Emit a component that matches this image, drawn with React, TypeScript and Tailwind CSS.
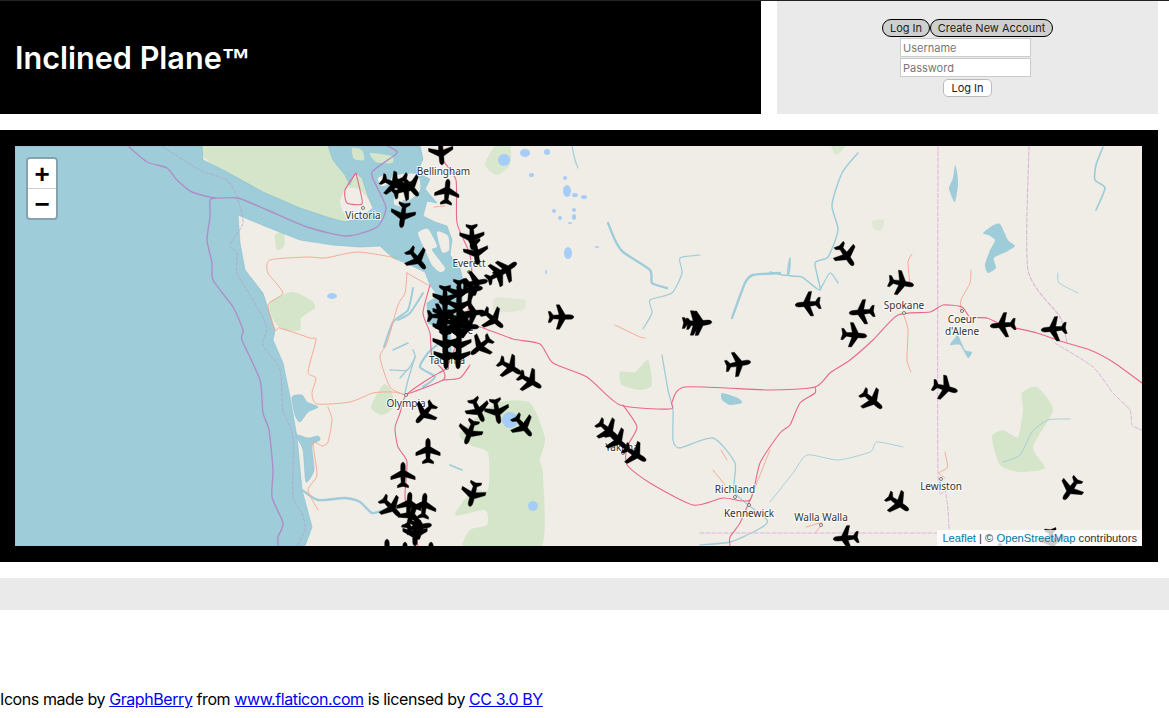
import React from "react";

const LAND = "#f0ede6";
const WATER = "#9fccd9";
const GREEN = "#d5e5c9";
const BLUE = "#a6cdf7";
const MOTOR = "#e8688c";
const TRUNK = "#f6a48c";
const PLANE = "M0,-12.8 C1.6,-12.8 2.3,-10.5 2.3,-8.5 L2.3,-4.2 L12.2,1.6 L12.2,4.7 L2.3,1.9 L1.8,7.6 L5.6,10.6 L5.6,12.8 L0,11.4 L-5.6,12.8 L-5.6,10.6 L-1.8,7.6 L-2.3,1.9 L-12.2,4.7 L-12.2,1.6 L-2.3,-4.2 L-2.3,-8.5 C-2.3,-10.5 -1.6,-12.8 0,-12.8Z";

const planes: [number, number, number][] = [
  [441, 152, 175], [393, 184, 115], [404, 188, 60], [410, 186, 140], [447, 192, 5], [403, 215, 188], [472, 237, 178], [476, 252, 172], [417, 259, 140],
  [498, 274, 60], [506, 270, 55], [475, 283, 80],
  [445, 298, 180], [445, 313, 180], [445, 328, 180], [445, 343, 180], [446, 356, 180],
  [459, 292, 180], [459, 305, 180], [459, 318, 180], [459, 331, 180], [459, 344, 180], [458, 356, 180],
  [440, 316, 90], [452, 322, 90], [470, 290, 80], [472, 313, 85], [466, 326, 95], [481, 346, 230],
  [493, 319, 130], [561, 317, 90], [695, 323, 90], [699, 323, 86],
  [846, 255, 145], [901, 283, 100], [808, 304, 265], [862, 312, 265], [854, 335, 95], [1003, 325, 265], [1054, 329, 265],
  [738, 364, 80], [510, 367, 120], [530, 381, 120], [425, 413, 222], [478, 410, 155], [497, 411, 170], [523, 426, 140], [470, 432, 200],
  [428, 451, 0], [403, 475, 0], [473, 494, 195], [391, 507, 135], [409, 505, 5], [424, 506, 5], [411, 517, 20], [419, 527, 80], [415, 533, 180],
  [387, 552, 0], [405, 555, 0], [431, 555, 0], [608, 430, 130], [617, 440, 130], [635, 454, 122], [945, 388, 105], [872, 400, 130], [898, 503, 125], [1071, 489, 215], [846, 538, 265], [1052, 541, 172], [1000, 556, 0],
];

const motorways = [
  "443,146 443,160 456,180 457,223 470,255 472,290 463,330 452,355 447,368 430,378 406,395 400,413 395,428 398,447 407,462 405,497 411,520 418,546",
  "463,325 480,327 513,339 540,344 553,363 587,377 620,405 670,409 672,402 685,387 770,390 815,387 830,373 850,360 873,340 898,315 930,312 943,305 962,307 970,317 987,318 1003,325 1037,333 1060,341 1090,350 1113,362 1142,383",
  "623,405 637,427 627,447 627,465 650,483 693,505 723,498 750,500 760,463 780,433 790,425 800,403 815,393 815,387",
  "750,500 740,523 730,537 730,546",
  "430,285 423,313 430,333 432,357 443,370 443,380 405,395",
  "443,380 460,378 470,365",
  "356,173 360,190 362,204 347,203 345,190 356,173",
];
const trunks = [
  "397,258 358,252 325,258 308,257 270,260 268,273 283,293 268,305 275,330 280,328 310,338 316,340 308,372 316,378 312,393 317,404 350,402 373,393 393,392 406,395",
  "328,407 332,420 328,442 322,446 313,443 317,475 308,490 318,510",
  "407,273 428,285",
  "407,273 405,293 398,305 387,343 380,357 390,387 405,395",
  "434,207 445,206",
  "615,325 640,337 645,338",
  "912,254 908,262 910,285",
  "971,270 970,283 961,300 961,312",
  "904,316 908,330 907,360 911,372",
  "945,452 947,462 947,468 939,473 945,478",
  "721,450 727,460",
  "713,470 725,485",
  "806,527 822,523 815,533",
  "770,450 750,500",
];
const rivers: [string, number][] = [
  ["608,223 615,240 623,252 650,270 652,283 667,288", 2.4],
  ["700,255 680,258 682,273 672,293 650,300 652,313 643,329", 1.2],
  ["732,318 745,283 753,275 780,273", 2.4],
  ["770,272 788,275 790,258 788,275 802,277 820,290 815,263 828,257 838,230 832,205 842,173 858,153", 1.5],
  ["820,290 830,273 838,283", 1.3],
  ["1103,147 1096,165 1095,180 1105,188 1096,210", 1.7],
  ["1058,273 1059,283 1078,293", 0.9],
  ["662,355 668,390 673,410 673,440 680,448 713,438 735,463 735,493 767,520 757,530 730,542 700,545", 1.3],
  ["770,502 793,473 807,455 838,460 870,452 877,442 903,447", 0.9],
  ["1003,462 1020,455 1032,432 1048,420 1070,419", 0.9],
  ["413,288 408,310 393,322 384,347", 2],
  ["423,293 410,313 398,320", 2],
  ["393,350 408,343", 1.6],
  ["413,350 415,357 407,370 390,370", 1.4],
  ["400,378 407,370", 1.4],
  ["405,393 408,380 415,357", 1.4],
  ["423,387 435,377 420,367 428,353 437,345", 2.2],
  ["302,490 318,500 345,498 360,502 372,513 385,510 395,510", 2.4],
  ["572,146 575,160 578,168", 1.2],
  ["448,320 450,350 446,366", 3],
  ["450,465 462,470", 1.6],
];
const labels: [string, number, number][] = [
  ["Victoria", 363, 219], ["Bellingham", 443.5, 175], ["Everett", 469, 267], ["Tacoma", 447, 364], ["Seattle", 457, 334], ["Olympia", 406, 407], ["Spokane", 904, 309],
  ["Coeur", 962, 323], ["d'Alene", 962, 335], ["Yakima", 622, 451], ["Richland", 735, 493], ["Kennewick", 749, 517], ["Walla Walla", 821, 521], ["Lewiston", 941, 490],
];
const dots: [number, number][] = [[363, 208], [406, 395], [447, 368], [904, 313], [962, 311], [623, 453], [735, 497], [749, 505], [821, 525], [941, 479], [469, 272]];
const lakes: [number, number, number, number][] = [
  [504, 160, 6, 6], [525, 153, 5, 4], [547, 152, 3, 3], [532, 175, 2, 2], [531, 175, 2, 2], [565, 178, 2, 2], [567, 191, 4, 6], [575, 195, 3, 2], [584, 197, 3, 2],
  [554, 211, 2, 2], [560, 218, 2, 2], [574, 210, 2, 2], [574, 217, 2, 3], [570, 223, 2, 1], [568, 253, 4, 6], [597, 247, 2, 1], [546, 272, 1, 2], [510, 420, 8, 8], [533, 506, 5, 5], [332, 296, 5, 3],
];

function smooth(pts: string, closed = false) {
  const p = pts.trim().split(/\s+/).map((s) => s.split(",").map(Number));
  const n = p.length;
  const at = (i: number) => (closed ? p[(i + n) % n] : p[Math.max(0, Math.min(n - 1, i))]);
  let d = `M${p[0][0]},${p[0][1]}`;
  const last = closed ? n : n - 1;
  for (let i = 0; i < last; i++) {
    const a = at(i - 1), b = at(i), c = at(i + 1), e = at(i + 2);
    const k = 0.11;
    d += ` C${b[0] + (c[0] - a[0]) * k},${b[1] + (c[1] - a[1]) * k} ${c[0] - (e[0] - b[0]) * k},${c[1] - (e[1] - b[1]) * k} ${c[0]},${c[1]}`;
  }
  return closed ? d + "Z" : d;
}

const line = (pts: string, stroke: string, w: number, dash?: string) => (
  <path d={smooth(pts)} fill="none" stroke={stroke} strokeWidth={w} strokeDasharray={dash} strokeLinejoin="round" strokeLinecap="round" />
);
const area = (pts: string, fill: string, opacity = 1, edge?: string) => (
  <path d={smooth(pts, true)} fill={fill} fillOpacity={opacity} stroke={edge ?? "none"} strokeWidth={edge ? 0.5 : 0} />
);

const SEA = "15,146 202,146 203,160 227,172 263,192 300,208 330,218 345,222 362,217 373,208 368,196 362,178 355,172 350,185 345,175 333,160 328,146 420,146 423,159 417,173 430,179 425,189 437,203 427,201 423,216 435,222 447,226 452,240 450,255 460,268 464,285 462,300 462,325 445,330 428,323 427,303 438,296 430,285 425,272 408,264 393,258 380,246 360,247 333,245 300,240 267,227 238,215 240,243 245,270 263,293 275,330 273,340 283,363 290,397 294,420 297,437 302,490 312,527 305,546 15,546";

function MapArt() {
  return (
    <svg viewBox="15 146 1127 400" className="block w-full h-full">
      <rect x="15" y="146" width="1127" height="400" fill={LAND} />
      {area("195,140 335,140 345,165 365,180 372,205 345,225 300,212 263,196 227,176", GREEN)}
      {area("340,202 347,188 360,190 372,208 350,222", LAND)}
      {area("270,302 292,292 311,300 315,308 301,318 300,330 283,330 272,318", GREEN)}
      {area("275,235 284,232 284,246 277,250", GREEN)}
      {area("378,392 385,384 392,392 393,408 382,415 371,408", GREEN)}
      {area("460,433 497,403 530,403 545,438 540,460 543,475 540,550 465,550 470,530 487,525 485,510 455,515 473,490 488,490 488,453 470,445", GREEN)}
      {area("620,372 635,372 648,360 652,385 640,390 622,385", GREEN)}
      {area("1037,387 1053,410 1033,447 1045,468 1020,472 1000,465 992,437 1003,430 1018,437 1023,410 1022,393", GREEN)}
      {area("495,146 510,146 510,165 497,175 485,165", GREEN, 0.8)}
      {area("495,298 525,300 522,310 495,312", GREEN, 0.6)}
      {area("830,142 845,146 836,155", GREEN, 0.8)}
      {area("872,221 884,220 881,231 874,229", GREEN, 0.6)}
      <path d={SEA.split(" ").map((p, i) => (i ? "L" : "M") + p).join(" ") + "Z"} fill={WATER} stroke="#86bdd2" strokeWidth="0.6" strokeLinejoin="round" />
      {area("393,176 417,174 420,190 407,201 390,190", LAND)}
      {area("418,233 428,229 437,246 432,250 445,268 440,272 432,265 425,250", LAND)}
      {area("437,232 448,236 449,250 442,252", LAND)}
      {area("352,148 362,150 364,160 354,159", GREEN)}
      {area("370,153 392,156 392,163 376,162", GREEN)}
      {area("395,197 403,199 400,206 394,204", LAND)}
      {area("378,178 386,175 388,184 381,186", LAND)}
      {area("292,397 302,395 307,402 318,407 308,412 300,422 295,415", WATER, 1, "#86bdd2")}
      {area("296,435 308,438 318,436 320,440 312,446 314,470 306,482 303,450", WATER, 1, "#86bdd2")}
      {area("722,393 738,398 742,403 730,405 722,400", WATER)}
      {area("955,165 957,172 958,185 955,202 951,195 949,188 953,178", WATER)}
      {area("983,233 992,226 1000,224 1008,240 1015,246 1006,252 994,258 996,268 988,273 985,265 990,250 995,240 988,235", WATER)}
      {area("955,338 958,335 965,350 972,352 968,358 960,345 950,345", WATER)}
      {rivers.map((r, i) => <React.Fragment key={i}>{line(r[0], WATER, r[1])}</React.Fragment>)}
      {lakes.map((l, i) => <ellipse key={i} cx={l[0]} cy={l[1]} rx={l[2]} ry={l[3]} fill={BLUE} />)}
      {line("128,146 147,162 167,168 177,180 192,192 215,198 238,198 267,210 307,227 347,236 377,227 386,208 377,187 372,172 397,153 387,146", "#ad8fc8", 1.4)}
      {line("215,198 210,200 210,217 207,240 212,263 213,280 233,307 243,330 242,340 260,380 263,413 269,430 273,470 272,497 283,523 278,537 278,546", "#ad8fc8", 1.4)}
      {line("163,147 200,170 227,180 237,197 243,223 230,245 237,253 237,273 253,300 267,327 263,345 280,370 283,410 293,437 293,497 302,513 305,530 297,546", "#b49ccd", 0.7, "3 2")}
      {line("938,146 938,473 945,490 948,510 950,546", "#dbb4d9", 1, "4 2")}
      {line("1029,146 1028,270 1060,317 1067,343", "#dbb4d9", 1.1, "4 2")}
      {line("1055,343 1093,367 1113,393 1130,410 1132,425 1142,430", "#dbb4d9", 1, "4 2")}
      {line("700,533 938,533", "#dbb4d9", 1, "4 2")}
      {trunks.map((t, i) => <React.Fragment key={i}>{line(t, TRUNK, 0.9)}</React.Fragment>)}
      {motorways.map((t, i) => <React.Fragment key={i}>{line(t, MOTOR, 1.1)}</React.Fragment>)}
      {dots.map((d, i) => <circle key={i} cx={d[0]} cy={d[1]} r="1.5" fill="#fff" stroke="#444" strokeWidth="0.7" />)}
      {labels.map((l, i) => (
        <text key={i} x={l[1]} y={l[2]} textAnchor="middle" fontSize="10" fill="#333" stroke="#fff" strokeWidth="2" strokeOpacity="0.8" className="[font-family:'Noto_Sans',sans-serif] [paint-order:stroke]">{l[0]}</text>
      ))}
      {planes.map((p, i) => <path key={i} d={PLANE} fill="#000" stroke="#000" strokeWidth="0.4" strokeLinejoin="round" transform={`translate(${p[0]} ${p[1]}) rotate(${p[2]})`} />)}
    </svg>
  );
}

export default function App() {
  return (
    <div className="w-[1169px] h-[718px] overflow-hidden bg-white border-t border-[#222] text-black [font-family:Inter,sans-serif]">
      <header className="flex gap-4 w-[1158px] h-[113px]">
        <div className="w-[761px] bg-black flex items-center pl-[15px] pt-[2px]">
          <h1 className="text-white text-[30.6px] font-semibold leading-none">Inclined Plane<span className="[font-family:'Liberation_Sans',sans-serif] font-bold text-[29px]">™</span></h1>
        </div>
        <div className="w-[381px] bg-[#eaeaea] flex flex-col items-center pt-[18px] text-[11px]">
          <div className="flex">
            <button className="h-[18px] w-[48px] rounded-full bg-[#cfcfcf] border border-black text-[#222] leading-none">Log In</button>
            <button className="h-[18px] w-[123px] rounded-full bg-[#cfcfcf] border border-black text-[#222] leading-none">Create New Account</button>
          </div>
          <input placeholder="Username" className="block w-[131px] h-[19px] bg-white border border-[#ccc] px-[2px] mt-px text-[11px] placeholder:text-[#777] mr-[4px]" />
          <input placeholder="Password" className="block w-[131px] h-[19px] bg-white border border-[#ccc] px-[2px] mt-px text-[11px] placeholder:text-[#777] mr-[4px]" />
          <button className="h-[18px] w-[49px] mt-[2px] rounded-[5px] bg-white border border-[#bbb] text-[#222] leading-none">Log In</button>
        </div>
      </header>
      <section className="mt-4 w-[1158px] h-[432px] bg-black pl-[15px] pr-[16px] py-4">
        <div className="relative w-[1127px] h-[400px] overflow-hidden">
          <MapArt />
          <div className="absolute left-[11px] top-[11px] w-[32px] h-[63px] rounded-[4px] border-2 border-[#86a2ad] overflow-hidden bg-white flex flex-col">
            <button className="h-[30px] border-b border-[#ccc] flex items-center justify-center text-[26px] font-bold leading-none [font-family:'Liberation_Sans',sans-serif]">+</button>
            <button className="h-[29px] flex items-center justify-center text-[26px] font-bold leading-none [font-family:'Liberation_Sans',sans-serif]">−</button>
          </div>
          <div className="absolute right-0 bottom-0 h-[16px] px-[5px] bg-white/80 text-[11.2px] leading-[16px] text-[#333] [font-family:'Liberation_Sans',sans-serif]">
            <a className="text-[#0078a8]">Leaflet</a> | © <a className="text-[#0078a8]">OpenStreetMap</a> contributors
          </div>
        </div>
      </section>
      <div className="mt-4 h-8 bg-[#eaeaea]" />
      <footer className="mt-[80px] text-[16px] leading-[19px] tracking-[-0.42px] whitespace-nowrap">
        Icons made by <a className="text-[#0000ee] underline">GraphBerry</a> from <a className="text-[#0000ee] underline">www.flaticon.com</a> is licensed by <a className="text-[#0000ee] underline">CC 3.0 BY</a>
      </footer>
    </div>
  );
}
